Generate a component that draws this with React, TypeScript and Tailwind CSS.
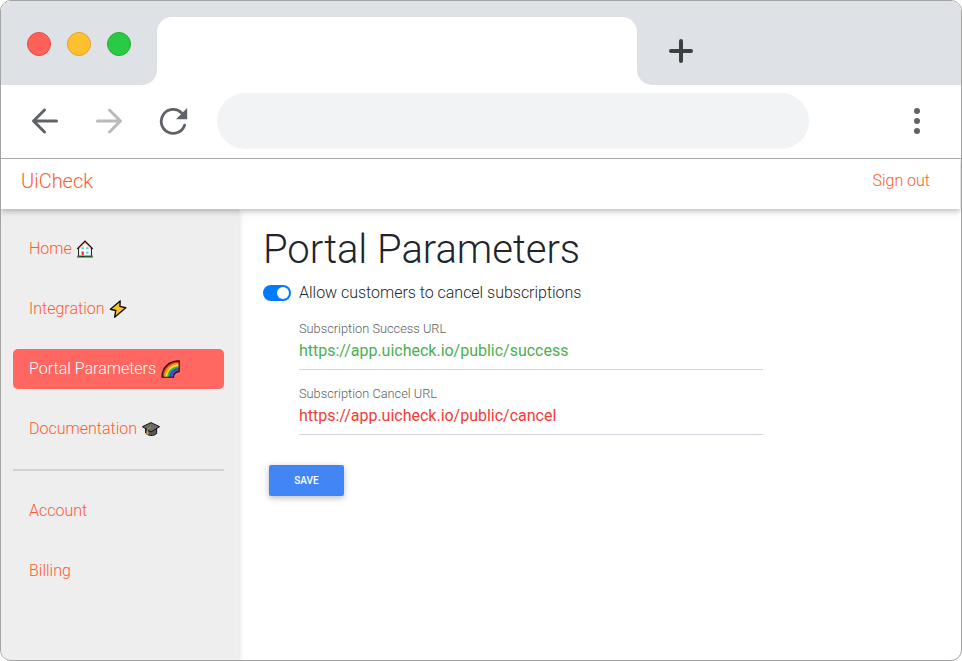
import type { ReactNode } from "react";

function HomeIcon() {
  return (
    <svg width="18" height="18" viewBox="0 0 18 18">
      <path d="M9 1.4 2.6 7.6V16.4H15.4V7.6Z" fill="#fff" stroke="#111" strokeWidth="1" />
      <path d="M1.2 8.8 9 1l7.8 7.8" fill="none" stroke="#111" strokeWidth="1.2" />
      <path d="M3 8.2 9 2.4l6 5.8" fill="none" stroke="#dd4a38" strokeWidth="1" />
      <path d="M5.5 7.2h2.3v2H5.5zM10.2 7.2h2.3v2h-2.3zM10.2 11.5h2.3v2.2h-2.3z" fill="#55cdf7" />
      <path d="M5.5 11.5h2.3v4.2H5.5z" fill="#ea3b25" />
      <path d="M1.2 15.6h3.9v1.1H1.2zM8.2 15.6h8.6v1.1H8.2z" fill="#2f8f3a" />
      <path d="M1 17.1h16" stroke="#222" strokeWidth=".7" />
    </svg>
  );
}

function BoltIcon() {
  return (
    <svg width="18" height="18" viewBox="0 0 18 18">
      <path d="M11.2 1 1.4 9.2l5.4 1.3-1.2 6.7 11.2-9.4-5.9-1.4Z" fill="#fbc02d" stroke="#111" strokeWidth="1.4" strokeLinejoin="round" />
    </svg>
  );
}

function RainbowIcon() {
  return (
    <svg width="19" height="18" viewBox="0 0 19 18">
      <path d="M1 17V15C1.3 7 8 1 18 1V11C14 11.4 12.2 14 12.2 17Z" fill="#ea3b25" />
      <g fill="none" strokeWidth="1.9">
        <path d="M2 17C2 8 9 2 18 2" stroke="#e8291c" />
        <path d="M3.9 17C3.9 9.2 10 3.8 18 3.8" stroke="#f8961e" />
        <path d="M5.7 17C5.7 10.3 11 5.5 18 5.5" stroke="#f8e82c" />
        <path d="M7.4 17C7.4 11.3 12 7.3 18 7.3" stroke="#32b44a" />
        <path d="M9.2 17C9.2 12.5 13 9 18 9" stroke="#1556d6" />
        <path d="M10.9 17C10.9 13.7 14 10.7 18 10.7" stroke="#7d3cc0" />
      </g>
      <path d="M1 17.2C1 7.5 8 .9 18.2.9V11.6C15 11.8 12.6 14 12.5 17.2Z" fill="none" stroke="#111" strokeWidth="1.1" />
    </svg>
  );
}

function CapIcon() {
  return (
    <svg width="20" height="18" viewBox="0 0 20 18">
      <path d="M4.6 7v6c2.5 3 8 3.4 11 .6V7Z" fill="#5a5a5a" stroke="#111" strokeWidth="1" />
      <path d="M1.4 6.7 10 2.6l8.6 4.1L10 12Z" fill="#6c6c6c" stroke="#111" strokeWidth="1" strokeLinejoin="round" />
      <path d="M10 6.9 6.6 9.2v4.6" fill="none" stroke="#c98d19" strokeWidth="1" />
      <path d="M5.6 11.6h1.8v3H5.6z" fill="#e8a820" />
    </svg>
  );
}

function NavItem({ label, icon, active = false }: { label: string; icon?: ReactNode; active?: boolean }) {
  return (
    <a className={`flex h-10 items-center rounded-[5px] px-4 leading-6 ${active ? "bg-[#ff6760] text-white" : "text-[#ff5b2e]"}`}>
      <span>{label}</span>
      {icon && <span className={active ? "ml-[5px]" : "ml-1"}>{icon}</span>}
    </a>
  );
}

function Field({ label, value, color }: { label: string; value: string; color: string }) {
  return (
    <div className="h-[65px] pt-[7px]">
      <div className="h-[47px] border-b border-[#ced4da]">
        <div className="h-[18px] text-[12.8px] leading-[12px] text-[#606060]">{label}</div>
        <div className={`text-base font-normal leading-5 tracking-[-0.01px] ${color}`}>{value}</div>
      </div>
    </div>
  );
}

function TabStrip() {
  return (
    <div className="flex h-[84px] shrink-0 bg-white">
      <div className="flex w-[156px] items-start gap-4 rounded-br-[15px] bg-[#dee1e6] pl-[26px] pt-[31px]">
        <span className="size-6 rounded-full border border-[#e24b41] bg-[#ff6058]" />
        <span className="size-6 rounded-full border border-[#e1a325] bg-[#ffc02f]" />
        <span className="size-6 rounded-full border border-[#23ae31] bg-[#2aca44]" />
      </div>
      <div className="h-[50px] w-[480px] bg-[#dee1e6] pt-4">
        <div className="h-[34px] rounded-t-[15px] bg-white" />
      </div>
      <div className="flex-1 rounded-bl-[15px] bg-[#dee1e6] pl-8 pt-[38px]">
        <svg width="24" height="24" viewBox="0 0 24 24" fill="none" stroke="#3c4043" strokeWidth="4" strokeLinecap="round">
          <path d="M12 2v20M2 12h20" />
        </svg>
      </div>
    </div>
  );
}

function Toolbar() {
  return (
    <div className="relative z-20 flex h-[74px] shrink-0 items-center border-b border-[#a9a9a9] bg-white pb-px pl-[30px] pr-[41px]">
      <svg width="28" height="28" viewBox="0 0 28 28" fill="none" stroke="#5f6368" strokeWidth="3" strokeLinecap="round" strokeLinejoin="round" className="-mt-px">
        <path d="M25.5 14H3M13.5 3 2.5 14l11 11" />
      </svg>
      <svg width="28" height="28" viewBox="0 0 28 28" fill="none" stroke="#bababc" strokeWidth="3" strokeLinecap="round" strokeLinejoin="round" className="-mt-px ml-9">
        <path d="M2.5 14H25M14.5 3l11 11-11 11" />
      </svg>
      <svg width="30" height="28" viewBox="0 0 30 28" className="-mt-px ml-9">
        <path d="M25.6 18.2A12 12 0 1 1 22.7 5.9" fill="none" stroke="#5f6368" strokeWidth="2.8" strokeLinecap="round" />
        <path d="M28.2 1v11.2H17Z" fill="#5f6368" />
      </svg>
      <div className="ml-[28px] h-14 w-[592px] rounded-full bg-[#f1f3f4]" />
      <svg width="6" height="28" viewBox="0 0 6 28" fill="#5f6368" className="ml-auto">
        <circle cx="3" cy="4" r="3" />
        <circle cx="3" cy="14" r="3" />
        <circle cx="3" cy="24" r="3" />
      </svg>
    </div>
  );
}

export default function App() {
  return (
    <div className="h-[661px] w-[962px] bg-white">
      <div className="flex h-full flex-col overflow-hidden rounded-[11px] border border-[#a3a3a3] bg-white font-['Roboto',sans-serif] text-base font-light text-[#212529]">
        <TabStrip />
        <Toolbar />
        <header className="relative z-10 mr-px flex h-[50px] shrink-0 items-start justify-between bg-white pl-5 pr-[30px] text-[#ff5b2e] shadow-[0_2px_5px_rgba(0,0,0,.2),0_2px_10px_rgba(0,0,0,.1)]">
          <span className="pt-2 text-xl leading-7">UiCheck</span>
          <span className="pt-[10px] leading-6">Sign out</span>
        </header>
        <div className="flex min-h-0 flex-1">
          <aside className="w-[238px] shrink-0 bg-[#eee] px-3 pt-5 shadow-[0_2px_5px_rgba(0,0,0,.12),0_2px_10px_rgba(0,0,0,.06)]">
            <nav className="flex flex-col gap-5 pr-[3px]">
              <NavItem label="Home" icon={<HomeIcon />} />
              <NavItem label="Integration" icon={<BoltIcon />} />
              <NavItem label="Portal Parameters" icon={<RainbowIcon />} active />
              <NavItem label="Documentation" icon={<CapIcon />} />
              <hr className="border-t-2 border-[#ced2d7]" />
              <NavItem label="Account" />
              <NavItem label="Billing" />
            </nav>
          </aside>
          <main className="flex-1 pl-6 pt-[17px]">
            <h1 className="text-[40px] leading-[48px] tracking-[-0.04px]">Portal Parameters</h1>
            <label className="mt-[7px] flex h-6 items-center">
              <span className="flex h-4 w-7 items-center justify-end rounded-full bg-[#007bff] p-0.5">
                <span className="size-3 rounded-full bg-white" />
              </span>
              <span className="ml-2 tracking-[-0.02px]">Allow customers to cancel subscriptions</span>
            </label>
            <div className="ml-9 mt-[11px] w-[464px]">
              <Field label="Subscription Success URL" value="https://app.uicheck.io/public/success" color="text-[#4caf50]" />
              <Field label="Subscription Cancel URL" value="https://app.uicheck.io/public/cancel" color="text-[#f43b35]" />
            </div>
            <button className="ml-1.5 mt-[19px] flex h-[31px] w-[75px] items-center justify-center rounded-xs bg-[#4285f4] text-[10px] font-medium text-white shadow-[0_2px_5px_rgba(0,0,0,.16),0_2px_10px_rgba(0,0,0,.12)]">
              SAVE
            </button>
          </main>
        </div>
      </div>
    </div>
  );
}
